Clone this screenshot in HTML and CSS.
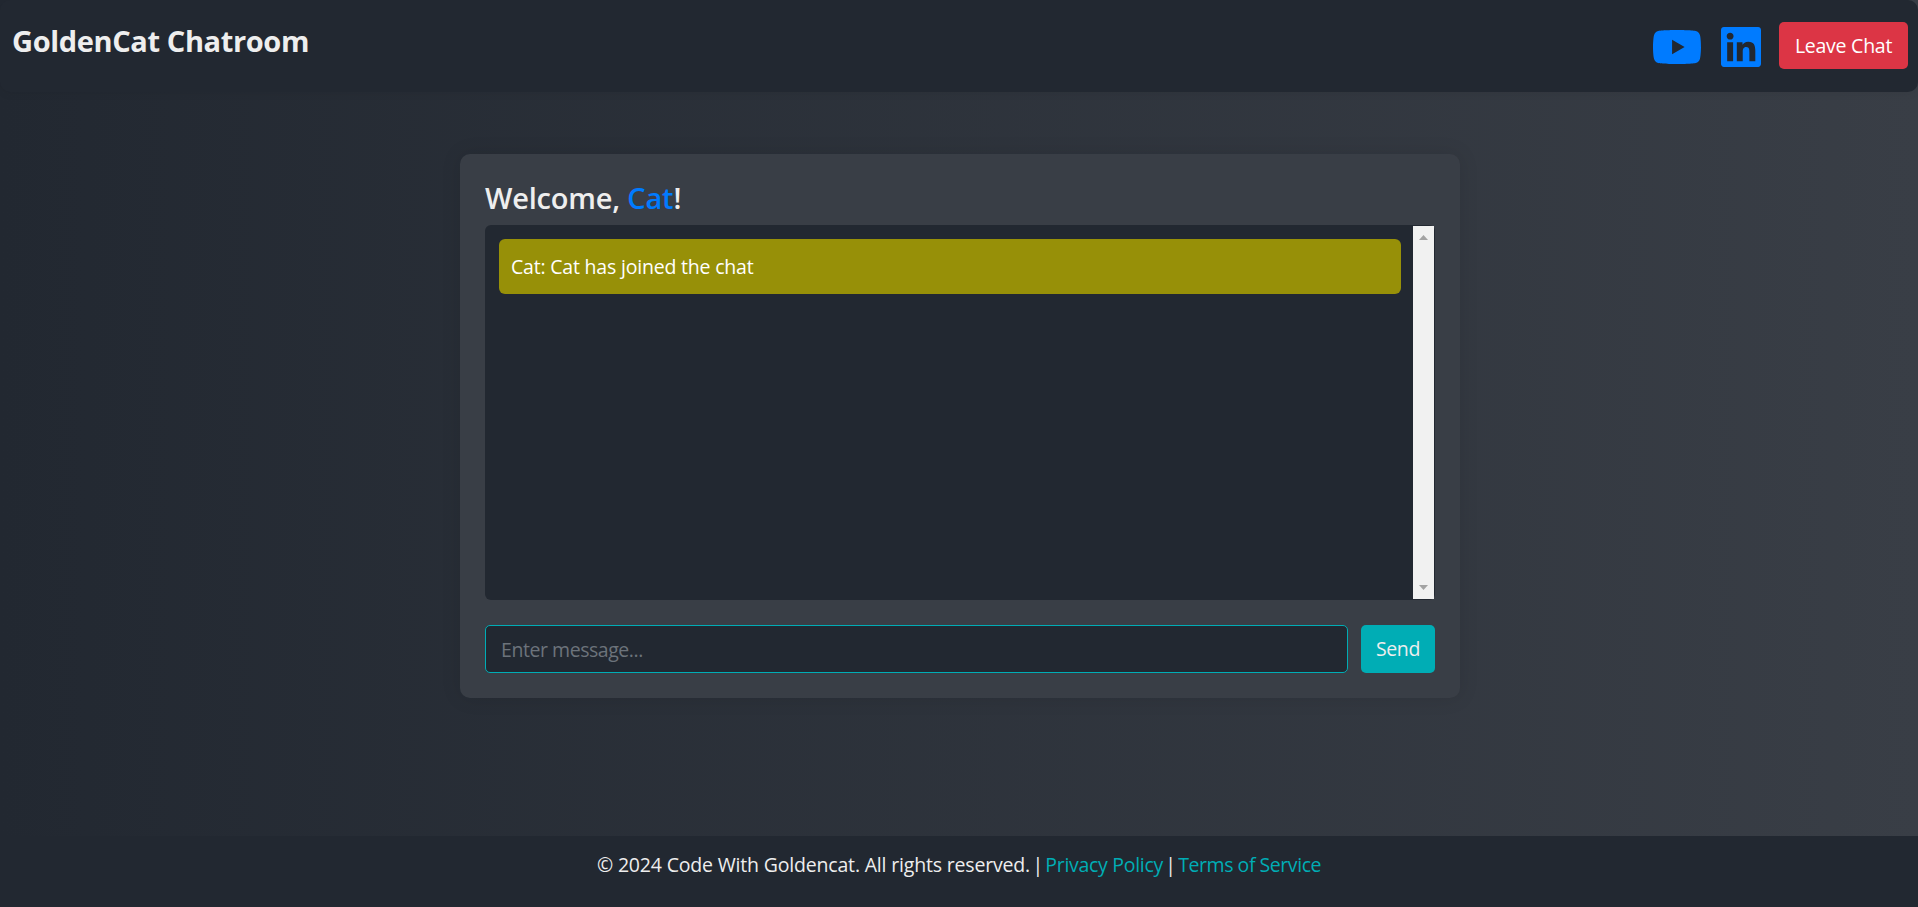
FILE: index.html
```html
<!DOCTYPE html>
<html lang="en">
<head>
<meta charset="utf-8">
<title>GoldenCat Chatroom</title>
<link rel="stylesheet" href="styles.css">
</head>
<body>
<header class="header">
  <h1 class="brand">GoldenCat Chatroom</h1>
  <nav class="actions">
    <a class="youtube" aria-label="YouTube"><svg viewBox="14.9 64 546.2 384" width="48" height="34" preserveAspectRatio="none"><path d="M549.655 124.083c-6.281-23.65-24.787-42.276-48.284-48.597C458.781 64 288 64 288 64S117.22 64 74.629 75.486c-23.497 6.322-42.003 24.947-48.284 48.597-11.412 42.867-11.412 132.305-11.412 132.305s0 89.438 11.412 132.305c6.281 23.65 24.787 41.5 48.284 47.821C117.22 448 288 448 288 448s170.78 0 213.371-11.486c23.497-6.321 42.003-24.171 48.284-47.821 11.412-42.867 11.412-132.305 11.412-132.305s0-89.438-11.412-132.305zm-317.51 213.508V175.185l142.739 81.205-142.739 81.201z"/></svg></a>
    <a class="linkedin" aria-label="LinkedIn"><svg viewBox="0 32 448 448" width="40" height="40"><path d="M416 32H31.9C14.3 32 0 46.5 0 64.3v383.4C0 465.5 14.3 480 31.9 480H416c17.6 0 32-14.5 32-32.3V64.3c0-17.8-14.4-32.3-32-32.3zM135.4 416H69V202.2h66.5V416zm-33.2-243c-21.3 0-38.5-17.3-38.5-38.5S80.9 96 102.2 96c21.2 0 38.5 17.3 38.5 38.5 0 21.3-17.2 38.5-38.5 38.5zm282.1 243h-66.4V312c0-24.8-.5-56.7-34.5-56.7-34.6 0-39.9 27-39.9 54.9V416h-66.4V202.2h63.7v29.2h.9c8.9-16.8 30.6-34.5 62.9-34.5 67.2 0 79.7 44.3 79.7 101.9V416z"/></svg></a>
    <button class="leave" type="button">Leave Chat</button>
  </nav>
</header>
<main class="main">
  <section class="card">
    <h2 class="welcome">Welcome, <span class="user">Cat</span>!</h2>
    <div class="chat">
      <div class="messages"><div class="message">Cat: Cat has joined the chat</div></div>
      <div class="scrollbar">
        <svg width="9" height="5" viewBox="0 0 9 5"><path d="M4.500 0L9 5H0z"/></svg>
        <svg width="9" height="5" viewBox="0 0 9 5"><path d="M0 0h9L4.500 5z"/></svg>
      </div>
    </div>
    <form class="composer">
      <input class="field" type="text" placeholder="Enter message...">
      <button class="send" type="button">Send</button>
    </form>
  </section>
</main>
<footer class="footer">© 2024 Code With Goldencat. All rights reserved. <span class="pipe">|</span> <a class="privacy">Privacy Policy</a> <span class="pipe">|</span> <a class="terms">Terms of Service</a></footer>
</body>
</html>
```
FILE: styles.css
```css
* { box-sizing: border-box; }
body {
  margin: 0;
  height: 907px;
  display: flex;
  flex-direction: column;
  overflow: hidden;
  background: linear-gradient(to right, #222831, #393e46);
  color: #eeeeee;
  font: 19.5px/30px "Open Sans", "Noto Sans", sans-serif;
  letter-spacing: -0.2px;
  white-space: nowrap;
}
button { font: inherit; border: 0; padding: 0; text-align: center; }
svg { display: block; }
.header {
  height: 92px;
  flex: none;
  display: flex;
  justify-content: space-between;
  padding: 22px 10px 0 12px;
  background: #222831;
  border-radius: 10px;
  box-shadow: 0 2px 8px rgba(0, 0, 0, 0.06);
}
.brand { margin: 0; font-size: 29px; line-height: 38px; font-weight: 700; letter-spacing: -0.37px; }
.actions { display: flex; height: 47px; }
.actions svg { fill: #007bff; }
.youtube { padding: 8px 20px 0 0; }
.linkedin { padding: 5px 18px 0 0; }
.leave { width: 129px; height: 47px; background: #dc3545; color: #fff; border-radius: 5px; letter-spacing: -0.25px; }
.main { flex: 1; padding: 62px 0 0 460px; }
.card {
  width: 1000px;
  height: 544px;
  padding: 25px;
  background: #393e46;
  border-radius: 10px;
  box-shadow: 0 0 20px rgba(0, 0, 0, 0.1);
}
.welcome { margin: 0 0 8px; font-size: 29px; line-height: 38px; font-weight: 600; }
.user { color: #007bff; }
.chat {
  height: 375px;
  display: flex;
  padding: 1px;
  background: #222831;
  border-radius: 6px;
}
.messages { flex: 1; padding: 13px 12px 0 13px; }
.message { height: 55px; padding: 12px; line-height: 31px; background: #979008; color: #fff; border-radius: 6px; }
.scrollbar {
  width: 21px;
  display: flex;
  flex-direction: column;
  justify-content: space-between;
  align-items: center;
  padding: 9px 0;
  background: #f1f1f1;
}
.scrollbar svg { fill: #a3a3a3; }
.composer { display: flex; gap: 13px; margin: 25px 0 0; }
.field {
  flex: 1;
  min-width: 0;
  height: 48px;
  padding: 0 15px;
  font: inherit;
  letter-spacing: -0.45px;
  background: #222831;
  border: 1px solid #00adb5;
  border-radius: 5px;
  color: #eeeeee;
}
.field::placeholder { color: #6c737b; }
.send { width: 74px; height: 48px; background: #00adb5; color: #eee; border-radius: 5px; letter-spacing: -0.4px; }
.footer { height: 71px; padding-top: 13.5px; background: #222831; text-align: center; letter-spacing: -0.18px; }
.pipe { margin: 0 -2.5px; }
.privacy, .terms { color: #00adb5; }
.privacy { letter-spacing: -0.3px; }
.terms { letter-spacing: -0.45px; }
```
